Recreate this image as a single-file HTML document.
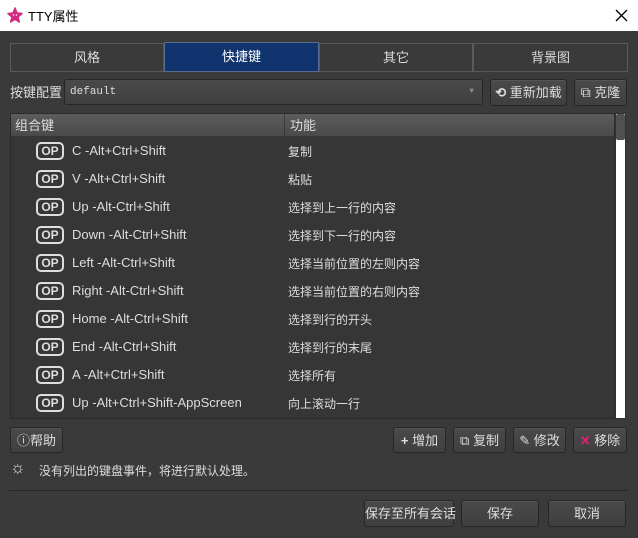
<!DOCTYPE html><html><head><meta charset="utf-8"><style>
*{box-sizing:border-box;margin:0;padding:0}
body{width:638px;height:538px;background:#3a3a3a;font-family:"Liberation Sans","Noto Sans CJK SC",sans-serif;font-size:13px;color:#ddd;position:relative;overflow:hidden}
.a{position:absolute;white-space:nowrap}
.title{left:0;top:0;width:638px;height:31px;background:#fff;color:#000;font-size:13px}
.tab{top:43px;height:29px;border:1px solid #5a5a5a;background:#3a3a3a;text-align:center;line-height:27px;font-size:13px;color:#ddd}
.btn{border:1px solid #262626;border-radius:3px;background:linear-gradient(#4a4a4a,#3f3f3f);height:27px;line-height:25px;text-align:center;color:#ddd;box-shadow:inset 0 1px 0 #555}
.op{left:36px;width:28px;height:18px;border:2px solid #ddd;border-radius:5px;font-weight:bold;font-size:12px;line-height:14px;text-align:center;color:#ddd}
.k{left:72px}.f{left:288px;font-size:12px}
</style></head><body>
<div class="a title">
<svg class="a" style="left:7px;top:7px" width="16" height="16" viewBox="0 0 16 16"><path d="M8 1l2 5 5 .5-4 3.5 1.3 5L8 12.3 3.7 15 5 10 1 6.5 6 6z" fill="#d42a7f" stroke="#d42a7f" stroke-linejoin="round" stroke-width="1.5"/><circle cx="6.5" cy="8" r=".8" fill="#fff"/><circle cx="9.5" cy="8" r=".8" fill="#fff"/></svg>
<span class="a" style="left:28px;top:6px">TTY属性</span>
<svg class="a" style="left:615px;top:9px" width="13" height="13" viewBox="0 0 13 13"><path d="M1 1L12 12M12 1L1 12" stroke="#000" stroke-width="1.3"/></svg>
</div>
<div class="a tab" style="left:10px;width:154px">风格</div>
<div class="a tab" style="left:164px;width:155px;background:#11336e;border-color:#5a6a8a;top:42px;height:30px;color:#fff">快捷键</div>
<div class="a tab" style="left:319px;width:154px">其它</div>
<div class="a tab" style="left:473px;width:155px">背景图</div>
<div class="a" style="left:10px;top:82px">按键配置</div>
<div class="a" style="left:64px;top:79px;width:419px;height:26px;border:1px solid #262626;border-radius:3px;background:linear-gradient(#4a4a4a,#404040);font-family:'Liberation Mono',monospace;font-size:11px;padding:6px 5px">default<span class="a" style="right:8px;top:7px;color:#888;font-size:8px">▼</span></div>
<div class="a btn" style="left:490px;top:79px;width:77px"><span style="font-weight:bold">⟲</span> 重新加载</div>
<div class="a btn" style="left:574px;top:79px;width:53px"><span style="font-size:14px">⧉</span> 克隆</div>
<div class="a" style="left:10px;top:113px;width:605px;height:306px;background:#363636;border:1px solid #2a2a2a"></div>
<div class="a" style="left:11px;top:114px;width:603px;height:22px;background:linear-gradient(#5c5c5c,#4a4a4a)"></div>
<div class="a" style="left:15px;top:115px">组合键</div>
<div class="a" style="left:284px;top:114px;width:1px;height:22px;background:#3a3a3a"></div>
<div class="a" style="left:290px;top:115px">功能</div>
<div class="a" style="left:615px;top:113px;width:11px;height:306px;background:#fff;border:1px solid #333"></div>
<div class="a" style="left:616px;top:114px;width:9px;height:26px;background:#505050;border-radius:2px"></div>
<div class="a op" style="top:142px">OP</div><div class="a k" style="top:143px">C -Alt+Ctrl+Shift</div><div class="a f" style="top:143px">复制</div>
<div class="a op" style="top:170px">OP</div><div class="a k" style="top:171px">V -Alt+Ctrl+Shift</div><div class="a f" style="top:171px">粘贴</div>
<div class="a op" style="top:198px">OP</div><div class="a k" style="top:199px">Up -Alt-Ctrl+Shift</div><div class="a f" style="top:199px">选择到上一行的内容</div>
<div class="a op" style="top:226px">OP</div><div class="a k" style="top:227px">Down -Alt-Ctrl+Shift</div><div class="a f" style="top:227px">选择到下一行的内容</div>
<div class="a op" style="top:254px">OP</div><div class="a k" style="top:255px">Left -Alt-Ctrl+Shift</div><div class="a f" style="top:255px">选择当前位置的左则内容</div>
<div class="a op" style="top:282px">OP</div><div class="a k" style="top:283px">Right -Alt-Ctrl+Shift</div><div class="a f" style="top:283px">选择当前位置的右则内容</div>
<div class="a op" style="top:310px">OP</div><div class="a k" style="top:311px">Home -Alt-Ctrl+Shift</div><div class="a f" style="top:311px">选择到行的开头</div>
<div class="a op" style="top:338px">OP</div><div class="a k" style="top:339px">End -Alt-Ctrl+Shift</div><div class="a f" style="top:339px">选择到行的末尾</div>
<div class="a op" style="top:366px">OP</div><div class="a k" style="top:367px">A -Alt+Ctrl+Shift</div><div class="a f" style="top:367px">选择所有</div>
<div class="a op" style="top:394px">OP</div><div class="a k" style="top:395px">Up -Alt+Ctrl+Shift-AppScreen</div><div class="a f" style="top:395px">向上滚动一行</div>
<div class="a btn" style="left:10px;top:427px;width:53px;height:26px">ⓘ帮助</div>
<div class="a btn" style="left:393px;top:427px;width:53px;height:26px"><b>+</b> 增加</div>
<div class="a btn" style="left:453px;top:427px;width:53px;height:26px">⧉ 复制</div>
<div class="a btn" style="left:513px;top:427px;width:53px;height:26px">✎ 修改</div>
<div class="a btn" style="left:573px;top:427px;width:54px;height:26px"><b style="color:#e0207a">✕</b> 移除</div>
<div class="a" style="left:10px;top:458px;font-size:17px">☼</div>
<div class="a" style="left:39px;top:462px;font-size:12px">没有列出的键盘事件，将进行默认处理。</div>
<div class="a" style="left:9px;top:490px;width:619px;height:1px;background:#262626"></div>
<div class="a btn" style="left:364px;top:500px;width:90px;height:27px">保存至所有会话</div>
<div class="a btn" style="left:461px;top:500px;width:78px;height:27px">保存</div>
<div class="a btn" style="left:548px;top:500px;width:78px;height:27px">取消</div>
</body></html>
